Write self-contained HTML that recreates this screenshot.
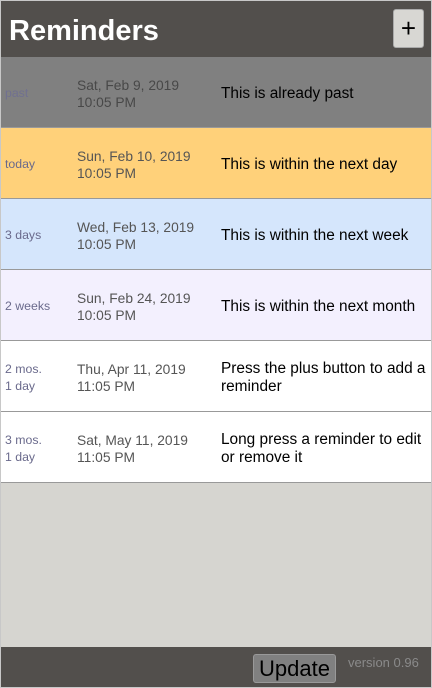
<!DOCTYPE html>
<html><head><style>
*{margin:0;padding:0;box-sizing:border-box}
body{width:432px;height:688px;background:#d6d5d0;font-family:"Liberation Sans",sans-serif;position:relative;overflow:hidden}
.frame{position:absolute;left:0;top:0;width:432px;height:688px;border:1px solid #c8c8c8;z-index:5;pointer-events:none}
.hdr{position:absolute;left:1px;top:1px;width:430px;height:56px;background:#524f4c}
.hdr h1{position:absolute;left:8px;top:14px;color:#fff;font-size:29px;font-weight:bold}
.plus{position:absolute;left:392px;top:8px;width:31px;height:39px;background:#d8d7d3;border:1px solid #aaa;border-radius:3px;font-size:26px;line-height:36px;text-align:center;color:#000}
.row{position:absolute;left:1px;width:430px;height:71px;border-bottom:1px solid #999}
.row div{position:absolute}
.l{left:4px;font-size:12.3px;color:#6a6a8c;line-height:17px}
.d{left:76px;font-size:13.8px;color:#555;line-height:17px}
.t{left:220px;font-size:15.4px;color:#000;line-height:18px}
.ftr{position:absolute;left:1px;top:647px;width:430px;height:41px;background:#524f4c}
.upd{position:absolute;left:253px;top:654px;width:83px;height:29px;background:#808080;border:1px solid #999;border-radius:3px;font-size:22px;line-height:27px;text-align:center;color:#000}
.ver{position:absolute;left:348px;top:655px;font-size:13px;color:#8a8a8a}
</style></head><body>
<div class="frame"></div>
<div class="hdr"><h1>Reminders</h1><div class="plus">+</div></div>
<div class="row" style="top:57px;background:#808080"><div class="l" style="top:28px;color:#707090">past</div><div class="d" style="top:20px;color:#484848">Sat, Feb 9, 2019<br>10:05 PM</div><div class="t" style="top:28px">This is already past</div></div>
<div class="row" style="top:128px;background:#ffd17a"><div class="l" style="top:28px">today</div><div class="d" style="top:20px">Sun, Feb 10, 2019<br>10:05 PM</div><div class="t" style="top:28px">This is within the next day</div></div>
<div class="row" style="top:199px;background:#d5e6fc"><div class="l" style="top:28px">3 days</div><div class="d" style="top:20px">Wed, Feb 13, 2019<br>10:05 PM</div><div class="t" style="top:28px">This is within the next week</div></div>
<div class="row" style="top:270px;background:#f3f0fe"><div class="l" style="top:28px">2 weeks</div><div class="d" style="top:20px">Sun, Feb 24, 2019<br>10:05 PM</div><div class="t" style="top:28px">This is within the next month</div></div>
<div class="row" style="top:341px;background:#fff"><div class="l" style="top:20px">2 mos.<br>1 day</div><div class="d" style="top:20px">Thu, Apr 11, 2019<br>11:05 PM</div><div class="t" style="top:19px">Press the plus button to add a<br>reminder</div></div>
<div class="row" style="top:412px;background:#fff"><div class="l" style="top:20px">3 mos.<br>1 day</div><div class="d" style="top:20px">Sat, May 11, 2019<br>11:05 PM</div><div class="t" style="top:19px">Long press a reminder to edit<br>or remove it</div></div>
<div class="ftr"></div>
<div class="upd">Update</div>
<div class="ver">version 0.96</div>
</body></html>
